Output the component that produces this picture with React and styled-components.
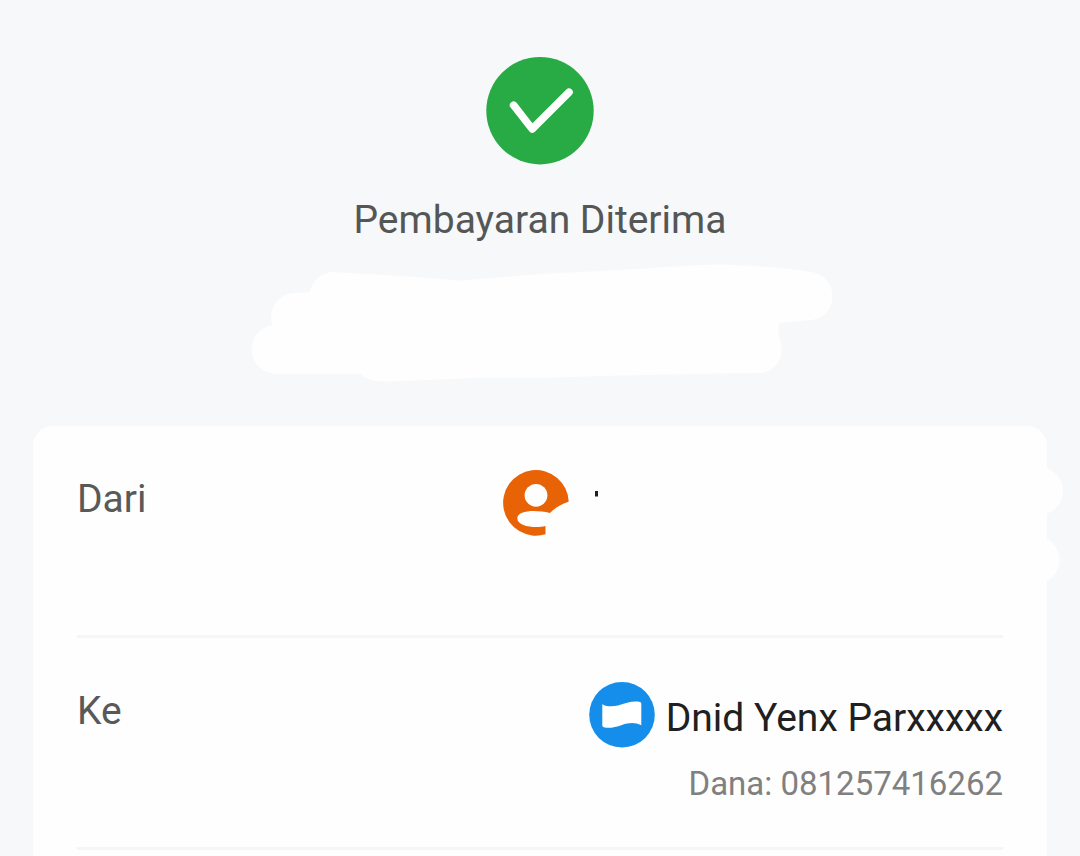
import React from "react";
import styled, { createGlobalStyle } from "styled-components";

//styling

const GlobalStyle = createGlobalStyle`
  * {
    box-sizing: border-box;
  }

  body {
    margin: 0;
    background: #f7f8fa;
    font-family: Roboto, "Liberation Sans", sans-serif;
  }
`;

const Page = styled.main`
  display: flex;
  flex-direction: column;
  min-height: 100vh;
  padding: 57px 33px 0;
`;

const Status = styled.header`
  display: flex;
  flex-direction: column;
  align-items: center;
  padding-bottom: 43px;
`;

const Icon = styled.svg`
  display: block;
  flex: none;
  width: ${props => props.$size}px;
  height: ${props => props.$size}px;
`;

const Title = styled.h1`
  margin: 30px 0 20px;
  color: #555756;
  font-size: 39px;
  font-weight: 400;
  line-height: 50px;
`;

const HiddenAmount = styled.svg`
  display: block;
  width: 582px;
  max-width: 100%;
  overflow: visible;
`;

const Card = styled.section`
  flex: 1;
  padding: 0 44px;
  background: #fefefe;
  border-radius: 20px 20px 0 0;
`;

const Row = styled.div`
  display: flex;
  justify-content: space-between;
  min-height: 212px;
  padding-top: 44px;
  border-bottom: 3px solid #f5f6f7;
`;

const Label = styled.span`
  color: #595959;
  font-size: 39px;
  line-height: 58px;
`;

const Party = styled.div`
  display: flex;
  flex-direction: column;
  align-items: flex-end;
`;

const PartyHead = styled.div`
  display: flex;
  gap: 11px;
`;

const Name = styled.span`
  color: #202020;
  font-size: 39px;
  line-height: 72px;
`;

const HiddenName = styled.svg`
  display: block;
  width: 423px;
  height: 140px;
  overflow: visible;
`;

const Account = styled.span`
  margin-top: 10px;
  color: #808080;
  font-size: 33px;
  line-height: 40px;
`;

function CheckIcon() {
  return (
    <Icon $size={108} viewBox="0 0 108 108" aria-hidden="true">
      <circle cx="54" cy="53.7" r="53.7" fill="#28aa44" />
      <path
        d="M27.6 48.2 46.2 72 83 35.2"
        fill="none"
        stroke="#fff"
        strokeWidth="7.6"
        strokeLinecap="round"
        strokeLinejoin="round"
      />
    </Icon>
  );
}

function SenderIcon() {
  return (
    <Icon $size={66} viewBox="0 0 66 66" aria-hidden="true">
      <path
        d="M65.7 31.7A32.8 32.8 0 1 0 42.5 64.2V56C32 58.8 14.3 56 14.3 48.4C14.3 40.5 32 39.5 47 43C51 38.5 58.5 34 65.7 31.7Z"
        fill="#e86305"
      />
      <circle cx="33" cy="25.3" r="11.4" fill="#fefefe" />
    </Icon>
  );
}

function DanaIcon() {
  return (
    <Icon $size={66} viewBox="0 0 66 66" aria-hidden="true">
      <circle cx="33" cy="32.8" r="32.8" fill="#148eea" />
      <path
        d="M13.3 22C15 24 22 25.2 29 23.5C37 21.2 43 18.7 51 19.9Q52.3 20.2 52.3 21.5V43.3C46 40 40 40.5 33 42.9C26 45.3 20 46.7 14.8 45.2Q13.3 44.7 13.3 43.4Z"
        fill="#fff"
      />
    </Icon>
  );
}

function App() {
  return (
    <>
      <GlobalStyle />
      <Page>
        <Status>
          <CheckIcon />
          <Title>Pembayaran Diterima</Title>
          <HiddenAmount viewBox="249 265 582 118" aria-hidden="true">
            <path
              d="M310 292C312 280 322 272 334 272L400 276L461 280.5L540 274L620 270L695 265.3C725 264 765 265 812 272C825 275 832.5 285 832.5 296C832.5 310 822 320 810 320L779 323L778.5 336C780.5 339 781.7 344 781.7 350C781.7 363 771 373 759 373L720 373.5L610 375.7L540 378L475 378L390 381.5C374 382 368 380 360 373.7L276 374C262 374 251.7 362 251.7 350C251.7 337 261 327 272.5 325C267 308 280 293 295 293Z"
              fill="#fefefe"
            />
          </HiddenAmount>
        </Status>
        <Card>
          <Row>
            <Label>Dari</Label>
            <Party>
              <PartyHead>
                <SenderIcon />
                <HiddenName viewBox="0 0 423 140" aria-hidden="true">
                  <circle cx="459" cy="21" r="24" fill="#fefefe" />
                  <circle cx="455" cy="90" r="24.5" fill="#fefefe" />
                  <rect x="15" y="21" width="3" height="5.5" fill="#202020" />
                </HiddenName>
              </PartyHead>
            </Party>
          </Row>
          <Row>
            <Label>Ke</Label>
            <Party>
              <PartyHead>
                <DanaIcon />
                <Name>Dnid Yenx Parxxxxx</Name>
              </PartyHead>
              <Account>Dana: 081257416262</Account>
            </Party>
          </Row>
        </Card>
      </Page>
    </>
  );
}

export default App;
